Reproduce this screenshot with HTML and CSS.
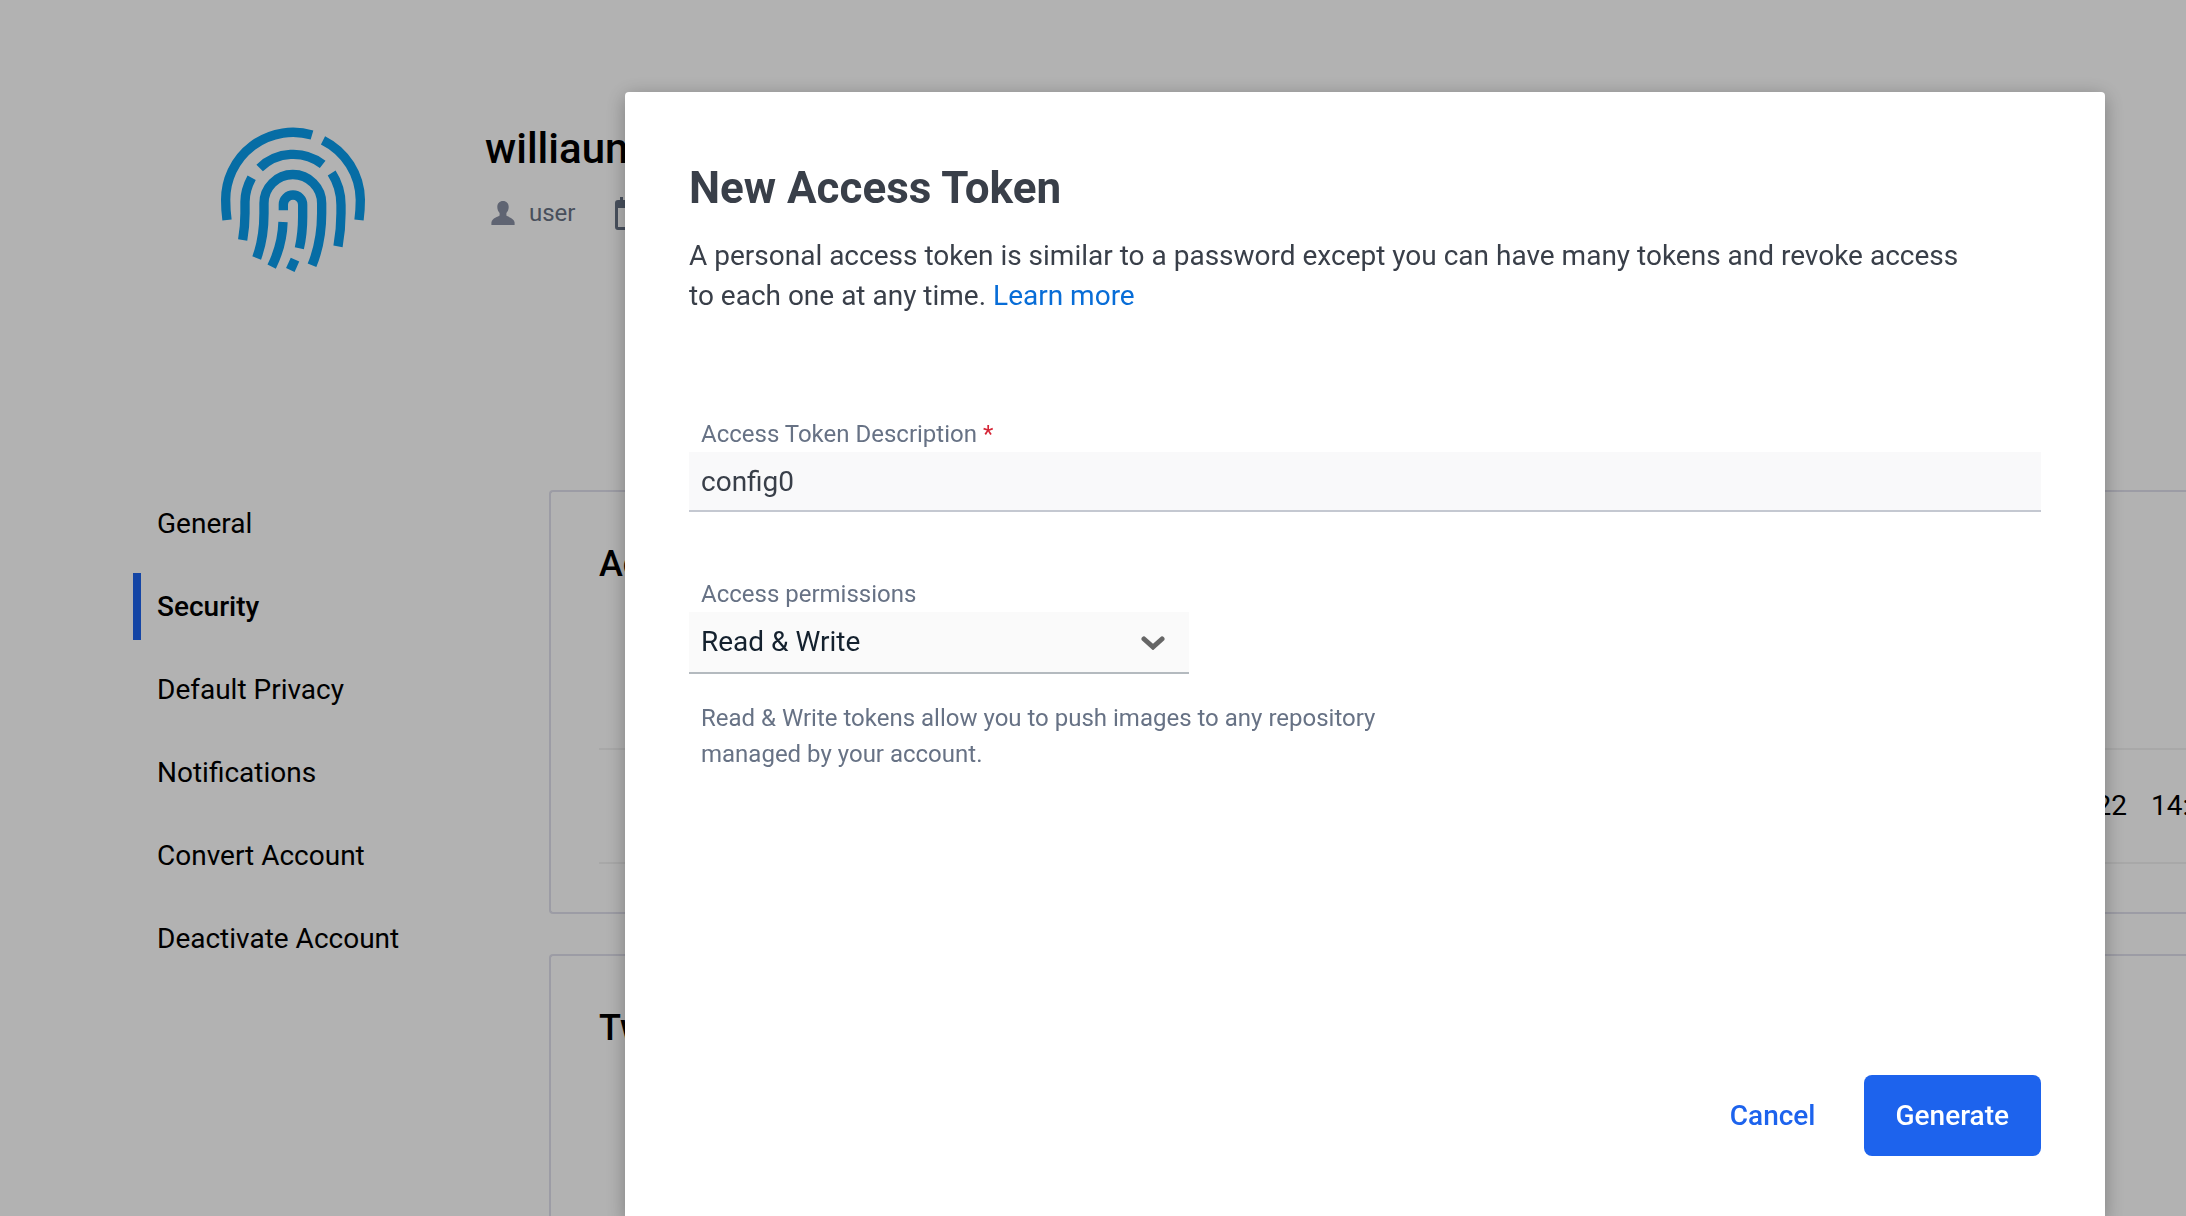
FILE: index.html
```html
<!DOCTYPE html>
<html lang="en">
<head>
<meta charset="utf-8">
<meta name="viewport" content="width=device-width, initial-scale=1">
<title>Account Settings - Security</title>
<link rel="stylesheet" href="styles.css">
</head>
<body>
<div class="page">
  <header class="profile">
    <svg class="avatar" viewBox="60 51 438 438" fill="none" stroke="currentColor" stroke-width="28" aria-hidden="true">
      <path d="M81 330Q77 300 77 269A202 202 0 0 1 336 75"/>
      <path d="M369 91A202 202 0 0 1 481 269Q481 300 477 330"/>
      <path d="M179 174A145 145 0 0 1 368 163"/>
      <path d="M155 203Q135 240 135 275V310Q135 350 128 390"/>
      <path d="M395 189Q423 232 423 285V310Q423 360 414 409"/>
      <path d="M170 444Q192 385 192 310V280A86 86 0 0 1 365 280V310Q365 395 336 466"/>
      <path d="M250 301V284A29 29 0 0 1 308 284V320Q308 370 298 415"/>
      <path d="M249 336Q247 405 215 470"/>
      <path d="M285 449L271 480"/>
    </svg>
    <div class="identity">
      <h2 class="username">williaun</h2>
      <div class="meta">
        <svg class="person" viewBox="0 0 24 24" fill="currentColor" aria-hidden="true"><path d="M12 0C8.500 0 6.300 2.500 6.300 6C6.300 8.600 7.300 10.600 8.600 12V14.500C7.500 15.700 1 17 .4 21.500V24H23.600V21.500C23 17 16.500 15.700 15.400 14.500V12C16.700 10.600 17.700 8.600 17.700 6C17.700 2.500 15.500 0 12 0Z"/></svg>
        <span>user</span>
        <svg class="calendar" viewBox="0 0 30 33" fill="currentColor" aria-hidden="true"><path d="M5 0H8V3H22V0H25V3H27A3 3 0 0 1 30 6V30A3 3 0 0 1 27 33H3A3 3 0 0 1 0 30V6A3 3 0 0 1 3 3H5ZM3 11V30H27V11Z"/></svg>
      </div>
    </div>
  </header>
  <div class="columns">
    <nav class="side-nav" aria-label="Account settings">
      <a href="#general">General</a>
      <a href="#security" class="active" aria-current="page">Security</a>
      <a href="#privacy">Default Privacy</a>
      <a href="#notifications">Notifications</a>
      <a href="#convert">Convert Account</a>
      <a href="#deactivate">Deactivate Account</a>
    </nav>
    <main class="cards">
      <section class="card">
        <h3>Access Tokens</h3>
        <table class="tokens">
          <tr><td class="date">2022</td><td class="time">14:22</td></tr>
        </table>
      </section>
      <section class="card">
        <h3>Two-Factor Authentication</h3>
      </section>
    </main>
  </div>
</div>

<div class="backdrop">
  <form class="dialog" role="dialog" aria-modal="true" aria-labelledby="dialog-title">
    <h1 id="dialog-title">New Access Token</h1>
    <p class="intro">A personal access token is similar to a password except you can have many tokens and revoke access to each one at any time. <a href="#learn">Learn more</a></p>
    <div class="field">
      <label for="description">Access Token Description <span class="required">*</span></label>
      <input id="description" type="text" value="config0" required>
    </div>
    <div class="field">
      <label for="permissions">Access permissions</label>
      <div class="select-box">
        <select id="permissions" aria-describedby="permissions-help">
          <option>Read &amp; Write</option>
        </select>
        <svg class="chevron" viewBox="0 0 24 14" fill="none" stroke="currentColor" stroke-width="5" stroke-linecap="round" aria-hidden="true"><path d="M3 3L12 11L21 3"/></svg>
      </div>
      <p class="help" id="permissions-help">Read &amp; Write tokens allow you to push images to any repository managed by your account.</p>
    </div>
    <div class="actions">
      <button type="button" class="cancel">Cancel</button>
      <button type="submit" class="generate">Generate</button>
    </div>
  </form>
</div>
</body>
</html>
```
FILE: styles.css
```css
* {
  box-sizing: border-box;
}

html,
body {
  height: 100%;
}

body {
  margin: 0;
  overflow: hidden;
  background: #fff;
  color: #000;
  font-family: Roboto, "Liberation Sans", sans-serif;
  font-size: 28px;
  line-height: 40px;
}

h1,
h2,
h3,
p {
  margin: 0;
}

.page {
  padding: 127px 0 0 133px;
}

.profile {
  display: flex;
  gap: 119px;
  height: 363px;
  padding-left: 87px;
}

.avatar {
  width: 146px;
  height: 146px;
  color: #099cec;
}

.username {
  font-size: 42px;
  font-weight: 500;
  line-height: 44px;
}

.meta {
  display: flex;
  align-items: center;
  gap: 14px;
  margin-top: 22px;
  padding-left: 6px;
  color: #677285;
  font-size: 24px;
}

.person {
  width: 24px;
  height: 24px;
  color: #8990a4;
}

.calendar {
  width: 30px;
  height: 33px;
  margin-left: 26px;
}

.columns {
  display: flex;
}

.side-nav {
  display: flex;
  flex: 0 0 416px;
  flex-direction: column;
  gap: 16px;
}

.side-nav a {
  padding: 14px 0 13px 16px;
  border-left: 8px solid transparent;
  color: inherit;
  text-decoration: none;
}

.side-nav .active {
  border-color: #1d63ed;
  font-weight: 500;
}

.cards {
  display: flex;
  flex: 1;
  flex-direction: column;
  gap: 40px;
  min-width: 0;
}

.card {
  height: 424px;
  padding: 50px 0 0 48px;
  border: 2px solid #e0e0ec;
  border-right: 0;
  border-radius: 4px 0 0 4px;
}

.card h3 {
  font-size: 36px;
  font-weight: 500;
  line-height: 44px;
}

.tokens {
  width: 100%;
  margin-top: 162px;
  border-top: 2px solid #f1f1f1;
  border-bottom: 2px solid #f1f1f1;
  border-spacing: 0;
  table-layout: fixed;
}

.tokens td {
  height: 112px;
  padding: 0;
  white-space: nowrap;
}

.tokens .date {
  padding-right: 24px;
  text-align: right;
}

.tokens .time {
  width: 35px;
}

.backdrop {
  position: fixed;
  inset: 0;
  padding: 92px 81px 0 625px;
  overflow: hidden;
  background: rgba(0, 0, 0, 0.3);
}

.dialog {
  display: flex;
  flex-direction: column;
  min-height: 1128px;
  padding: 66px 64px 64px;
  border-radius: 4px;
  background: #fff;
  box-shadow: 0 4px 20px rgba(0, 0, 0, 0.3);
  color: #393f49;
}

.dialog h1 {
  font-size: 44px;
  font-weight: 700;
  line-height: 60px;
}

.intro {
  margin-top: 18px;
  margin-bottom: 100px;
  padding-right: 64px;
}

.intro a {
  color: #086dd7;
  text-decoration: none;
}

.field {
  display: flex;
  flex-direction: column;
  margin-bottom: 64px;
}

.field label {
  padding: 0 12px;
  color: #677285;
  font-size: 24px;
  line-height: 36px;
}

.required {
  color: #d52536;
}

.field input,
.field select {
  width: 100%;
  height: 60px;
  padding: 0 12px;
  border: 0;
  border-bottom: 2px solid #c4c8d1;
  border-radius: 0;
  outline: 0;
  background: #f9f9fa;
  color: #393f49;
  font: inherit;
}

.select-box {
  display: grid;
  align-items: center;
  width: 500px;
  max-width: 100%;
}

.field select {
  grid-area: 1 / 1;
  height: 62px;
  border-color: #b4babf;
  background: #fafafa;
  color: #14212e;
  appearance: none;
}

.chevron {
  grid-area: 1 / 1;
  justify-self: end;
  width: 24px;
  height: 14px;
  margin-right: 24px;
  color: #666;
  pointer-events: none;
}

.help {
  max-width: 748px;
  margin-top: 26px;
  padding: 0 12px;
  color: #677285;
  font-size: 24px;
  line-height: 36px;
}

.actions {
  display: flex;
  justify-content: flex-end;
  margin-top: auto;
}

.actions button {
  height: 81px;
  padding: 0 32px;
  border: 0;
  border-radius: 8px;
  background: none;
  color: #1d63ed;
  font: inherit;
  font-weight: 500;
}

.actions .cancel {
  margin-right: 16px;
}

.actions .generate {
  background: #1d63ed;
  color: #fff;
}
```
